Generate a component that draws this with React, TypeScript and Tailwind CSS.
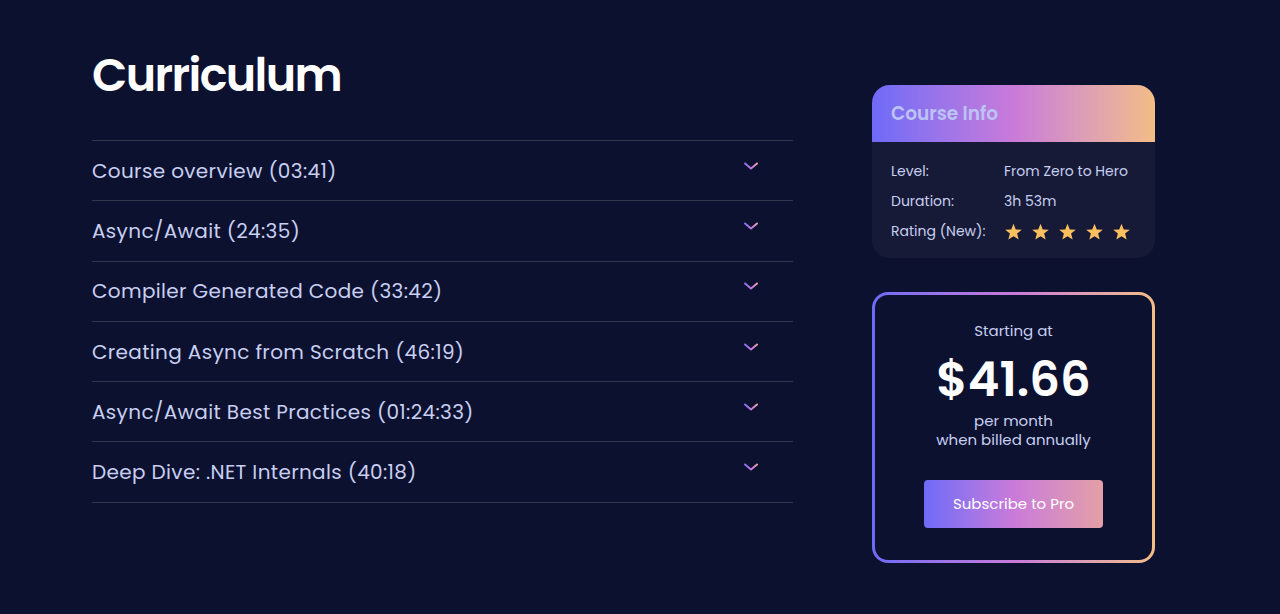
import React from 'react'

const lessons = [
  'Course overview (03:41)',
  'Async/Await (24:35)',
  'Compiler Generated Code (33:42)',
  'Creating Async from Scratch (46:19)',
  'Async/Await Best Practices (01:24:33)',
  'Deep Dive: .NET Internals (40:18)',
]

function Chevron() {
  return (
    <svg width="16" height="10" viewBox="0 0 16 10" fill="none">
      <defs>
        <linearGradient id="chev" x1="0" y1="0" x2="16" y2="0" gradientUnits="userSpaceOnUse">
          <stop offset="0" stopColor="#7b6cf6" />
          <stop offset="0.6" stopColor="#c77ad9" />
          <stop offset="1" stopColor="#f2b787" />
        </linearGradient>
      </defs>
      <path d="M2 2.5 L8 7.5 L14 2.5" stroke="url(#chev)" strokeWidth="2" strokeLinecap="round" strokeLinejoin="round" />
    </svg>
  )
}

function Star() {
  return (
    <svg width="19" height="18" viewBox="0 0 24 23">
      <path
        d="M12 1 L14.9 8.2 L22.6 8.6 L16.6 13.5 L18.6 21 L12 16.8 L5.4 21 L7.4 13.5 L1.4 8.6 L9.1 8.2 Z"
        fill="#fbbf5e"
      />
    </svg>
  )
}

export default function App() {
  return (
    <div className="min-h-[614px] w-full bg-[#0c1130] font-['Poppins','Open_Sans',sans-serif] text-[#c8cff0]">
      <div className="flex items-start pl-[92px] pt-[46px]">
        {/* Curriculum */}
        <div className="w-[701px]">
          <h1 className="text-[46px] font-semibold leading-[58px] tracking-[-1.6px] text-white">Curriculum</h1>
          <div className="mt-[36px] border-t border-[#34384f]">
            {lessons.map((lesson) => (
              <div
                key={lesson}
                className="flex h-[60.3px] items-center justify-between border-b border-[#34384f] pr-[34px]"
              >
                <span className="text-[20px] tracking-[0.35px]">{lesson}</span>
                <span className="-mt-[10px]">
                  <Chevron />
                </span>
              </div>
            ))}
          </div>
        </div>

        {/* Sidebar */}
        <div className="ml-[79px] mt-[39px] flex w-[283px] flex-col gap-[34px]">
          <div className="overflow-hidden rounded-[18px] bg-[#161a37]">
            <div className="flex h-[57px] items-center bg-gradient-to-r from-[#6e6af7] via-[#c97ad9] to-[#f3bd85] px-[19px]">
              <span className="text-[18.5px] font-semibold text-[#bcc3f5]">Course Info</span>
            </div>
            <div className="px-[19px] pb-[16px] pt-[19px] text-[14px]">
              <div className="grid grid-cols-[113px_1fr] gap-y-[9px] items-center">
                <span>Level:</span>
                <span>From Zero to Hero</span>
                <span>Duration:</span>
                <span>3h 53m</span>
                <span>Rating (New):</span>
                <span className="flex gap-[8px]">
                  <Star />
                  <Star />
                  <Star />
                  <Star />
                  <Star />
                </span>
              </div>
            </div>
          </div>

          <div className="rounded-[16px] bg-gradient-to-r from-[#6e6af7] via-[#c97ad9] to-[#f3bd85] p-[3px]">
            <div className="flex flex-col items-center rounded-[13px] bg-[#0c1130] pb-[32px] pt-[25px]">
              <span className="text-[15px] leading-[22px]">Starting at</span>
              <span className="mt-[14px] text-[48px] font-semibold leading-[48px] text-white">$41.66</span>
              <span className="mt-[7px] text-[15px] leading-[19px]">per month</span>
              <span className="text-[15px] leading-[19px]">when billed annually</span>
              <button className="mt-[31px] h-[48px] w-[179px] rounded-[4px] bg-gradient-to-r from-[#6e6af7] via-[#c97ad9] to-[#e49fa6] text-[15px] text-white">
                Subscribe to Pro
              </button>
            </div>
          </div>
        </div>
      </div>
    </div>
  )
}
